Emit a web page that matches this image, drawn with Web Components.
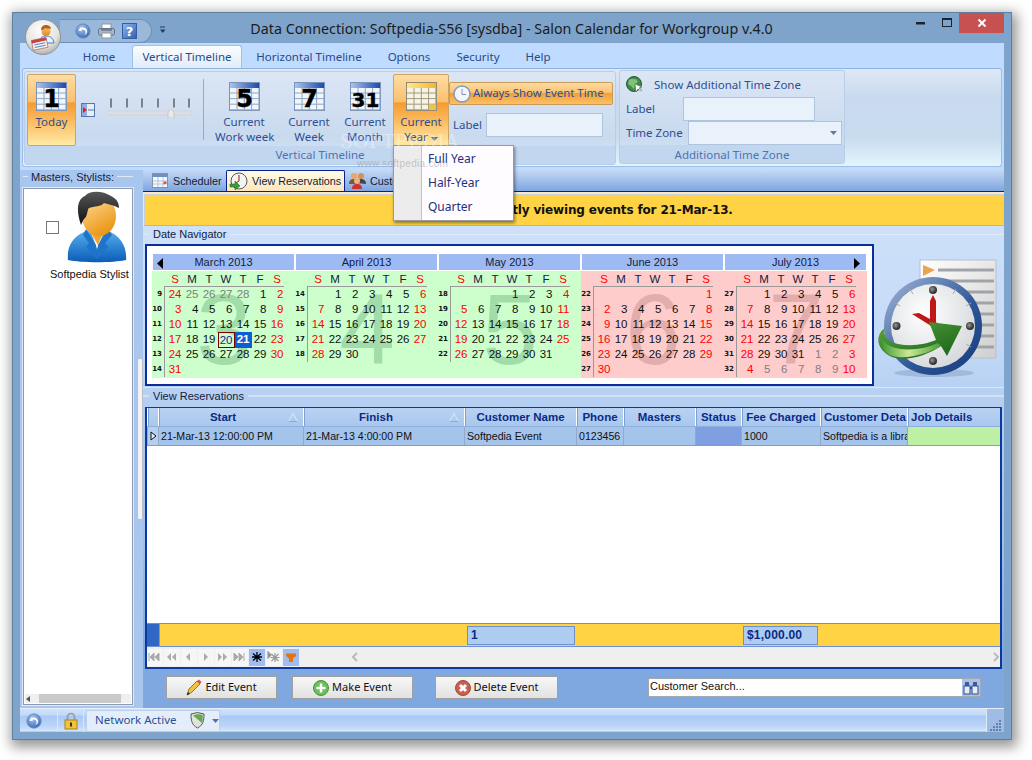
<!DOCTYPE html>
<html><head><meta charset="utf-8"><title>Salon Calendar</title>
<style>
html,body{margin:0;height:100%;background:#fff}
body{padding:12px;box-sizing:border-box;width:1032px;height:760px;overflow:hidden;font-family:"Liberation Sans",sans-serif}
</style></head><body>
<app-window>
  <title-bar></title-bar>
  <ribbon-tabs></ribbon-tabs>
  <ribbon-panel></ribbon-panel>
  <main-area>
    <side-panel slot="side"></side-panel>
    <split-bar slot="split"></split-bar>
    <doc-tabs></doc-tabs>
    <notice-bar>You are currently viewing events for 21-Mar-13.</notice-bar>
    <date-navigator></date-navigator>
    <section-cap>View Reservations</section-cap>
    <res-grid></res-grid>
    <action-row></action-row>
  </main-area>
  <status-bar></status-bar>
  <year-menu></year-menu>
  <soft-mark></soft-mark>
</app-window>
<script>
const UI='"Noto Sans","Open Sans",sans-serif', TH='"Liberation Sans",sans-serif';
function def(name,fn){customElements.define(name,class extends HTMLElement{
  connectedCallback(){if(this.shadowRoot)return;const r=this.attachShadow({mode:'open'});r.innerHTML=typeof fn==='function'?fn(this):fn;}
});}
let gid=0;
function calIcon(d,hot){const id='c'+(++gid);
  const head=hot?['#ffe98a','#f5b52e']:['#a9c4ee','#1c48b0'];
  let lines='';for(let x=8;x<30;x+=7.3)lines+=`<path d="M${x} 6V28" stroke="${hot?'#a09a80':'#90a6c4'}"/>`;
  for(let y=11;y<28;y+=5.6)lines+=`<path d="M1 ${y}H30" stroke="${hot?'#a09a80':'#90a6c4'}"/>`;
  return `<svg width="31" height="29" viewBox="0 0 31 29" style="display:block;overflow:visible"><defs><linearGradient id="${id}"><stop offset="0" stop-color="${head[0]}"/><stop offset="1" stop-color="${head[1]}"/></linearGradient></defs>
  <rect x=".5" y=".5" width="30" height="28" fill="${hot?'#f7f4e4':'#f2f6fb'}" stroke="${hot?'#8f8a70':'#7a93b8'}"/><rect x="1" y="1" width="29" height="5" fill="url(#${id})"/>${lines}
  ${hot?'<rect x="23" y="22.5" width="7" height="5.5" fill="#f5c23c"/>':''}
  ${d?`<text x="15.5" y="25" text-anchor="middle" font-family="DejaVu Sans" font-weight="700" font-size="${d.length>1?20:24}" fill="#000" stroke="#000" stroke-width=".4">${d}</text>`:''}</svg>`;}
const backIcon=(s=18)=>`<svg width="${s}" height="${s}" viewBox="0 0 18 18" style="display:block"><defs><radialGradient id="bk" cx=".4" cy=".3" r=".8"><stop offset="0" stop-color="#a9c8f0"/><stop offset="1" stop-color="#2f62b0"/></radialGradient></defs><circle cx="9" cy="9" r="8" fill="url(#bk)" stroke="#5f86bd"/><path d="M6.5 4.5 3.8 8.5l4 .9-.8-1.6c2-.9 4.2-.2 4.8 1.8.4 1.5-.2 2.8-1.6 3.9 2.8-.8 4-3 3.2-5.4-.9-2.6-3.8-3.6-6.6-2.4z" fill="#fff"/></svg>`;

def('app-window',`<style>
:host{display:block;position:relative;box-sizing:border-box;width:1000px;height:728px;background:#7ea4cc;border:1px solid #5f7f9f;box-shadow:2px 4px 12px 3px rgba(0,0,0,.42);padding:0 7px 7px}
.c{display:flex;flex-direction:column;height:100%}
</style><div class="c"><slot></slot></div>`);

def('title-bar',`<style>
:host{display:block;height:30px;flex:none;position:relative;font-family:${UI}}
.row{display:flex;align-items:center;height:30px;margin-left:-7px;margin-right:-7px}
.orb{flex:none;margin:6px 0 0 12px;width:36px;height:36px;position:relative;z-index:3;margin-bottom:-12px}
.pill{flex:none;margin-left:-1px;width:92px;height:24px;box-sizing:border-box;margin-top:5px;border:1px solid #6e8fb3;border-left:0;border-radius:0 12px 12px 0;background:#9ab9da;display:flex;align-items:center;gap:7px;padding-left:15px}
.more{flex:none;margin:5px 0 0 7px;width:8px}
.t{flex:1;text-align:center;font-size:14.300px;color:#1b1b1b;white-space:nowrap;margin-left:-2px;margin-right:50px;padding-top:1px}
.btns{flex:none;display:flex;align-self:flex-start;margin-right:7px}
.b{width:26px;height:20px;display:flex;align-items:center;justify-content:center}
.x{width:45px;height:20px;background:#c75050;display:flex;align-items:center;justify-content:center;margin-left:-1px}
</style><div class="row">
<div class="orb"><svg width="36" height="36" viewBox="0 0 36 36"><defs><radialGradient id="o" cx=".45" cy=".3" r=".8"><stop offset="0" stop-color="#fff"/><stop offset=".6" stop-color="#e6e4e0"/><stop offset="1" stop-color="#9a9a98"/></radialGradient><linearGradient id="sk" x1="0" y1="0" x2="0" y2="1"><stop offset="0" stop-color="#f8c070"/><stop offset="1" stop-color="#e08a20"/></linearGradient></defs>
<circle cx="18" cy="18" r="17.5" fill="url(#o)" stroke="#8f9296"/>
<path d="M14 24c1-6 4-7 7-7s7 1 8 7z" fill="#eef3fb" stroke="#3c7ec8"/><circle cx="21" cy="12.500" r="4.500" fill="url(#sk)"/><path d="M16 11c0-4 3-5 5-5s5 1 5 4c-2-1-4 0-6-1-1 1-2 2-4 2z" fill="#b5601a"/>
<g transform="rotate(-12 14 24)"><rect x="7" y="20" width="15" height="10" fill="#f4f2ee" stroke="#a05050" stroke-width=".6"/><rect x="7" y="20" width="15" height="3" fill="#c94040"/><path d="M9 25h11M9 27.500h11" stroke="#5f86c8"/></g></svg></div>
<div class="pill">${backIcon(16)}
<svg width="17" height="16" viewBox="0 0 17 16"><rect x="4" y="1" width="9" height="6" fill="#fff" stroke="#8c97a5"/><rect x=".5" y="5.500" width="16" height="6.500" rx="1.500" fill="#aab6c6" stroke="#66758a"/><rect x="4" y="10" width="9" height="5" fill="#fff" stroke="#8c97a5"/><path d="M3 7h11" stroke="#40506a"/></svg>
<svg width="15" height="16" viewBox="0 0 15 16" style="overflow:visible"><defs><linearGradient id="hp" x1="0" y1="0" x2="1" y2="1"><stop offset="0" stop-color="#8fb8ee"/><stop offset="1" stop-color="#2c5fb5"/></linearGradient></defs><rect x=".5" y=".5" width="14" height="15" fill="url(#hp)" stroke="#345f9f"/><text x="7.500" y="13" text-anchor="middle" font-family="DejaVu Sans" font-weight="700" font-size="13" fill="#fff">?</text></svg>
</div>
<div class="more"><svg width="8" height="9" viewBox="0 0 8 9" style="display:block"><path d="M1 1h5" stroke="#213a63"/><path d="M1 3.500h5.500L3.700 7z" fill="#213a63"/></svg></div>
<div class="t">Data Connection: Softpedia-S56 [sysdba] - Salon Calendar for Workgroup v.4.0</div>
<div class="btns"><div class="b"><svg width="10" height="3"><rect width="9" height="2.500" fill="#1c2430"/></svg></div>
<div class="b"><svg width="11" height="10"><rect x=".5" y=".5" width="9" height="8" fill="none" stroke="#1c2430"/><rect x="0" y="0" width="10" height="2" fill="#1c2430"/></svg></div>
<div class="x"><svg width="10" height="10"><path d="M1.500 1.500l7 7M8.500 1.500l-7 7" stroke="#fff" stroke-width="2"/></svg></div></div>
</div>`);

def('ribbon-tabs',`<style>
:host{display:block;height:25px;flex:none;background:#bfdbff;font-family:${UI};font-size:11.500px;color:#2a4a86}
.r{display:flex;height:25px;padding-left:46px;box-sizing:border-box}
.t{display:flex;align-items:center;justify-content:center;height:22px;margin-top:3px;padding-bottom:2px;box-sizing:border-box}
.a{background:linear-gradient(#fafdff,#e0ecfa);border:1px solid #9fc1ea;border-bottom:0;border-radius:3px 3px 0 0;box-sizing:border-box;height:23px;margin-top:2px;color:#2a4a86;padding-bottom:1px}
</style><div class="r"><div class="t" style="width:66px">Home</div><div class="t a" style="width:110px">Vertical Timeline</div>
<div class="t" style="width:134px">Horizontal Timeline</div><div class="t" style="width:66px">Options</div><div class="t" style="width:72px">Security</div><div class="t" style="width:48px">Help</div></div>`);

def('big-btn',h=>`<style>
:host{display:block;flex:none;box-sizing:border-box;height:72px;margin-top:2px;font-family:${UI};font-size:11.500px;line-height:15px;color:#2d4f92;text-align:center;border-radius:2px}
:host([hot]){background:linear-gradient(#fddda2 0,#fac06f 38%,#f59c2f 40%,#fbb658 62%,#ffeaa6 100%);border:1px solid #c9a566}
.i{display:flex;justify-content:center;padding-top:7px;height:31px}
:host(:not([hot])) .i{padding-top:8px;height:30px}
.l{margin-top:2px;white-space:nowrap}
:host([hot]) .l{margin-top:1px}
u{text-decoration-thickness:1px}
</style><div class="i"><slot name="icon"></slot>${calIcon(h.getAttribute('d')||'',h.hasAttribute('year'))}</div><div class="l">${h.getAttribute('l1')}<br>${h.getAttribute('l2')||''}</div>`);

def('ribbon-panel',`<style>
:host{display:block;height:102px;flex:none;background:#bfdbff;font-family:${UI};font-size:11.500px;color:#2d4f92;box-sizing:border-box;padding:0 2px 3px}
.p{height:99px;box-sizing:border-box;border:1px solid #9dbfe8;border-top-color:#8fb4e0;border-radius:3px;background:linear-gradient(#dde8f6,#c9daee 30%,#c8dbef 70%,#e3f5fd);display:flex;padding:2px 1px 0;gap:3px}
.g{box-sizing:border-box;height:94px;border:1px solid #b7cde8;border-radius:3px;display:flex;flex-direction:column;background:linear-gradient(#dbe6f5,#c9daef 70%,#d6e6f6)}
.m{flex:1;display:flex;min-height:0;padding-left:2px}
.cap{height:18px;flex:none;background:#c1d7ef;text-align:center;line-height:17px;color:#4f72b0}
.g2 .cap{line-height:19px}
.slider{flex:none;width:123px;height:72px;margin-top:2px;display:flex;align-items:flex-end;padding-bottom:28px;box-sizing:border-box;padding-left:5px}
.sl{margin-left:13px}
.sep{flex:none;width:1px;height:61px;margin:7px 0 0 4px;background:#9fa9b6}
.rc{flex:none;width:166px;display:flex;flex-direction:column;}
.ab{box-sizing:border-box;height:23px;width:164px;margin-top:10px;border:1px solid #c79a55;border-radius:2px;background:linear-gradient(#fddda2,#fbc272 45%,#f59f35 50%,#fcc066);display:flex;align-items:center;gap:2px;padding-left:3px;white-space:nowrap;color:#2d4f92}
.ab span{padding-bottom:2px;font-size:11.400px}
.lr{display:flex;align-items:center;margin-top:8px;padding-left:4px;gap:4px}
.lr span{width:29px;flex:none;padding-bottom:2px}
.in{box-sizing:border-box;height:24px;border:1px solid #aec4df;background:#e9f1fb;flex:none}
.g2 .m{flex-direction:column;padding:0 0 0 6px;position:relative}
.g2r{display:flex;align-items:center;height:24px}
.g2r span{width:57px;flex:none;padding-bottom:2px}
</style><div class="p">
<div class="g" style="width:592px"><div class="m">
<big-btn hot d="1" l1="<u>T</u>oday" style="width:49px"></big-btn>
<div class="slider"><svg width="14" height="14" style="display:block;margin-bottom:1px"><rect x=".5" y=".5" width="13" height="13" fill="#e8eef7" stroke="#5577aa"/><rect x="1" y="1" width="5" height="12" fill="#8fb0e0"/><path d="M2 4l4 3-4 3z" fill="#e02020"/><path d="M7 7h6" stroke="#5577aa"/></svg>
<svg class="sl" width="84" height="20" style="display:block"><g stroke="#222"><path d="M3 .5v9M19 .5v9M34 .5v9M50 .5v9M66 .5v9M81 .5v9" /></g><rect x="0" y="13" width="84" height="4" fill="#dcdfe2" stroke="#cfd3d8"/><path d="M60 14l3-3 3 3v6h-6z" fill="#e9e9e9" stroke="#c8c8c8"/></svg></div>
<div class="sep"></div>
<big-btn d="5" l1="Current" l2="Work week" style="width:58px;margin-left:11px"></big-btn>
<big-btn d="7" l1="Current" l2="Week" style="width:44px;margin-left:14px"></big-btn>
<big-btn d="31" l1="Current" l2="Month" style="width:44px;margin-left:12px"></big-btn>
<big-btn hot year l1="Current" l2="Year <svg width='7' height='4'><path d='M0 0h7L3.500 4z' fill='#4a6a9a'/></svg>" style="width:56px;margin-left:6px"></big-btn>
<div class="rc"><div class="ab"><svg width="18" height="18" viewBox="0 0 18 18"><circle cx="9" cy="9" r="8" fill="#f5f6f8" stroke="#7e9ac4" stroke-width="1.500"/><path d="M9 4v5.500h4" fill="none" stroke="#7e93b5"/></svg><span>Always Show Event Time</span></div>
<div class="lr"><span>Label</span><div class="in" style="width:117px"></div></div></div>
</div><div class="cap">Vertical Timeline</div></div>
<div class="g g2" style="width:226px;margin-top:-1px"><div class="m">
<div class="g2r" style="height:26px"><svg width="17" height="17" viewBox="0 0 17 17" style="flex:none;margin-right:11px"><circle cx="8" cy="8" r="7.500" fill="#3f8a4a" stroke="#225c30"/><path d="M3 4c3-2 5 0 7-1l2 3-3 2-1 5-3-3-3-2z" fill="#7fc27a"/><path d="M9 8l1 8 2-3 3 2 1-1-3-2 3-1z" fill="#fff" stroke="#555" stroke-width=".5"/></svg><span style="width:auto;padding:0">Show Additional Time Zone</span></div>
<div class="g2r"><span>Label</span><div class="in" style="width:132px"></div></div>
<div class="g2r"><span style="width:62px">Time Zone</span><div class="in" style="width:154px;position:relative"><svg width="7" height="4" style="position:absolute;right:4px;top:9px"><path d="M0 0h7L3.500 4z" fill="#5a7aaa"/></svg></div></div>
</div><div class="cap">Additional Time Zone</div></div>
</div>`);

def('main-area',`<style>
:host{display:block;flex:1;min-height:0;background:#a9c6ef}
.w{display:flex;height:100%}
.s{flex:none;display:flex}
.m{flex:1;min-width:0;display:flex;flex-direction:column;background:linear-gradient(#d2e3fb 0,#c6dbf8 30%,#b2cdf1 45%,#9fbeea 70%,#7fa8e0 90%)}
</style><div class="w"><div class="s"><slot name="side"></slot><slot name="split"></slot></div><div class="m"><slot></slot></div></div>`);

def('side-panel',`<style>
:host{display:block;width:116px;height:100%;box-sizing:border-box;font-family:${TH};font-size:11px;color:#14203c;padding:0 3px 3px;background:#a9c6ef;position:relative}
.gb{height:100%;box-sizing:border-box;display:flex;flex-direction:column}
.h{height:18px;flex:none;display:flex;align-items:flex-start;gap:3px;white-space:nowrap;font-size:11px;line-height:14px}
.h i{height:1px;background:#dfe9f7;display:block;margin-top:6px}
.l{flex:1;background:#fff;border:1px solid #8c9bb1;box-shadow:0 0 0 1px #dfe9f7;display:flex;flex-direction:column;min-height:0}
.it{display:flex;height:86px;position:relative;flex:none;flex-direction:column;align-items:center}
.row{display:flex;align-items:flex-start;width:100%}
.cb{width:11px;height:11px;border:1px solid #777;margin:32px 8px 0 22px;background:#fff;flex:none}
.name{white-space:nowrap;font-size:11px;margin-top:5px;color:#111;padding-left:26px;width:100%;box-sizing:border-box}
.sp{flex:1}
.sb{height:9px;flex:none;background:#efefef;display:flex;align-items:center;margin:0 1px 1px}
.sb b{display:block;width:82px;height:9px;background:#c9c9c9;margin-left:8px}
</style><div class="gb"><div class="h"><i style="width:5px"></i><span>Masters, Stylists:</span><i style="flex:1"></i></div>
<div class="l"><div class="it"><div class="row"><div class="cb"></div>
<svg width="60" height="72" viewBox="0 0 60 72" style="flex:none;margin-top:2px"><defs><linearGradient id="sk2" x1=".2" y1="0" x2=".7" y2="1"><stop offset="0" stop-color="#ffd98f"/><stop offset="1" stop-color="#e8920e"/></linearGradient><linearGradient id="su" x1="0" y1="0" x2="0" y2="1"><stop offset="0" stop-color="#58b0f0"/><stop offset="1" stop-color="#0a5cb8"/></linearGradient><linearGradient id="hr" x1="0" y1="0" x2="0" y2="1"><stop offset="0" stop-color="#555"/><stop offset="1" stop-color="#111"/></linearGradient></defs>
<ellipse cx="30" cy="68" rx="30" ry="3" fill="#d0d8e0"/>
<path d="M1 69c-1-12 3-24 21-30l8 12 9-12c16 6 21 18 20 30-14 3-44 3-58 0z" fill="url(#su)"/>
<path d="M22 36l8 22 9-22-9 6z" fill="#f7f7f7"/><path d="M21 37l10 17 7-17-6-5h-6z" fill="#f2a52c"/><path d="M19 38l-3 6 6 8-3 4 11 12-1-14zM41 38l4 6-7 8 3 4-11 12 1-14z" fill="#1f74c8"/>
<ellipse cx="32" cy="25" rx="17" ry="20" fill="url(#sk2)"/>
<path d="M14 34C9 20 10 8 18 5c5-6 18-5 26 0 6 3 8 7 8 12-6-3-12-4-15-5-3 4-10 3-15 5-2 1-1 8-5 11-1 1-2 4-3 6z" fill="url(#hr)"/></svg></div>
<div class="name">Softpedia Stylist</div></div><div class="sp"></div>
<div class="sb"><svg width="6" height="8"><path d="M5 1 1 4l4 3z" fill="#555"/></svg><b></b></div></div></div>`);

def('split-bar',`<style>
:host{display:block;width:7px;height:100%;background:#a9c6ef;position:relative}
.t{height:162px;margin-top:188px;background:#f3f3f3;border:1px solid #b9c0ca;border-radius:2px;box-sizing:border-box;margin-left:1px;width:6px}
</style><div class="t"></div>`);

def('doc-tabs',()=>`<style>
:host{display:block;height:22px;flex:none;background:linear-gradient(#c4d9f5,#7fa6e0);border-bottom:1px solid #0a1f8f;box-sizing:border-box;font-family:${TH};font-size:10.800px;color:#111a33}
.r{display:flex;height:21px;padding-left:1px}
.t{display:flex;align-items:center;gap:4px;white-space:nowrap;height:21px;box-sizing:border-box;padding-left:8px}
.a{background:linear-gradient(#fffbe8,#fde6bc);border:1px solid #0a1f8f;border-bottom:0;margin-left:1px;padding-left:2px;border-radius:2px 2px 0 0}
</style><div class="r"><div class="t" style="width:81px;gap:5px"><svg width="16" height="15"><rect x=".5" y=".5" width="15" height="14" fill="#f6f8fb" stroke="#8193ae"/><rect x="1" y="1" width="14" height="3" fill="#6f8fc0"/><path d="M6 4v10M11 4v10M1 8h14M1 11h14" stroke="#b6c4d8"/><rect x="11.500" y="8.500" width="3" height="2.500" fill="#e8504a"/></svg><span>Scheduler</span></div>
<div class="t a" style="width:119px"><svg width="19" height="19" viewBox="0 0 19 19" style="flex:none"><circle cx="10" cy="9" r="8" fill="#f5f5f0" stroke="#556"/><path d="M10 3v6l-3 2" stroke="#a01818" fill="none"/><path d="M1 12h5v-3l5 5-5 4v-3H1z" fill="#3c9c3c" stroke="#1f6f1f" stroke-width=".6"/></svg><span>View Reservations</span></div>
<div class="t" style="width:90px;padding-left:4px"><svg width="17" height="17" viewBox="0 0 17 17"><circle cx="5" cy="4" r="3" fill="#e8a566"/><path d="M0 12c0-4 2-5 5-5s5 1 5 5z" fill="#7a5a3a"/><circle cx="12" cy="4" r="3" fill="#d89050"/><path d="M8 11c0-3 2-4 4-4s5 1 5 5z" fill="#444"/><circle cx="8" cy="9" r="3" fill="#f0b080"/><path d="M3 17c0-4 2-5 5-5s5 1 5 5z" fill="#cc3333"/></svg><span>Customers</span></div></div>`);

def('notice-bar',`<style>
:host{display:block;flex:none;height:34px;box-sizing:border-box;padding-top:2px;background:#fde9c8}
.b{height:32px;background:#ffd343;border:1px solid #c7cfda;border-bottom-color:#aeb6c2;box-sizing:border-box;margin-left:1px;display:flex;align-items:center;justify-content:center;font:700 12px "DejaVu Sans",sans-serif;letter-spacing:-.15px;color:#111;white-space:nowrap;}
</style><div class="b"><slot></slot></div>`);

const MONTHS=[['March 2013',3,[9,10,11,12,13,14],[[24,1],[25,1],[26,1],[27,1],[28,1]],31,'g',6,[]],
['April 2013',4,[14,15,16,17,18],[[0]],30,'g',5,[]],
['May 2013',5,[18,19,20,21,22],[[0],[0],[0]],31,'g',5,[]],
['June 2013',6,[22,23,24,25,26,27],[[0],[0],[0],[0],[0],[0]],30,'r',6,[]],
['July 2013',7,[27,28,29,30,31,32],[[0]],31,'r',6,[1,2,3,4,5,6,7,8,9,10]]];
def('cal-month',h=>{const m=MONTHS[+h.getAttribute('i')];const[title,num,wk,pre,len,col,rows,nxt]=m;
 let cells=pre.map(p=>p[0]?[p[0],'o']:[0,'']);for(let d=1;d<=len;d++)cells.push([d,'']);nxt.forEach(d=>cells.push([d,'o']));
 let html='';
 cells.forEach((c,i)=>{const sun=i%7==0||i%7==6;let k=c[1]=='o'?'o':'';if(sun)k='w';if(num==3&&c[0]==20&&!c[1])k='td';if(num==3&&c[0]==21&&!c[1])k='sel';html+=`<div class="d ${k}">${c[0]||''}</div>`;});
 const wkh=wk.map(w=>`<div class="wk">${w}</div>`).join('');
 return `<style>
 :host{display:block;width:143px;flex:none;font-family:${TH};font-size:11.500px;color:#111;position:relative}
 .h{height:16px;margin:0 1px 1px;background:#9dbbf2;text-align:center;line-height:16px;color:#14203c;font-size:11px;}
 .b{height:107px;background:${col=='g'?'#ccffcc':'#ffcccc'};position:relative}
 .big{position:absolute;left:42px;top:16px;font:400 100px/84px "Liberation Sans",sans-serif;color:${col=='g'?'rgba(30,110,60,.24)':'rgba(110,50,50,.2)'};width:60px;text-align:center}
 .names{display:grid;grid-template-columns:repeat(7,17px);margin-left:14.500px;height:14px;line-height:15px;text-align:center;position:relative;color:#14203c;padding-top:1px}
 .names .w{color:#f00}
 .line{height:0;border-top:1px solid #999;margin-left:12px;width:120px;position:relative}
 .body{display:flex;position:relative}
 .wks{width:12px;flex:none;border-right:1px solid #999;box-sizing:content-box;margin-right:1.500px;height:${rows*15}px}
 .wk{height:15px;font:700 7px/15px "DejaVu Sans",sans-serif;text-align:right;padding-right:2px;color:#111}
 .g{display:grid;grid-template-columns:repeat(7,17px);grid-auto-rows:15px;align-content:start}
 .d{text-align:right;padding-right:2px;line-height:15px;box-sizing:border-box;height:15px}
 .o{color:#808080}.w{color:#f00}
 .sel{background:#0a5fd6;color:#fff;font-weight:700;height:16px;margin-top:-.5px}
 .td{outline:1px solid #7a0000;outline-offset:-1px;color:#1a1a9a;height:16px;margin-top:-.5px;line-height:16px}
 </style><div class="h">${title}</div><div class="b"><div class="big">${num}</div>
 <div class="names"><div class="w">S</div><div>M</div><div>T</div><div>W</div><div>T</div><div>F</div><div class="w">S</div></div><div class="line"></div>
 <div class="body"><div class="wks">${wkh}</div><div class="g">${html}</div></div></div>`;});

def('date-navigator',`<style>
:host{display:block;flex:none;height:162px;box-sizing:border-box;font-family:${TH};font-size:11px;color:#14203c;border-bottom:1px solid #dce8f8;position:relative}
.cap{display:flex;align-items:flex-start;height:17px;box-sizing:border-box;gap:4px;line-height:14px;padding-top:1px}
.cap i{height:1px;background:#dfe9f7;display:block;margin-top:7px}
.row{display:flex;margin-left:2px;margin-top:0}
.box{flex:none;width:729px;height:142px;box-sizing:border-box;border:2px solid #0a2f9a;background:#fff;padding:8px 5px 0;display:flex;position:relative;margin-top:1px}
.nav{position:absolute;top:12px}
.ic{flex:none;margin:15px 0 0 2px}
</style><div class="cap"><i style="width:6px"></i><span>Date Navigator</span><i style="flex:1"></i></div>
<div class="row"><div class="box"><cal-month i="0"></cal-month><cal-month i="1"></cal-month><cal-month i="2"></cal-month><cal-month i="3"></cal-month><cal-month i="4"></cal-month>
<svg class="nav" style="left:10px" width="7" height="11"><path d="M6 0v11L0 5.500z" fill="#000"/></svg><svg class="nav" style="left:707px" width="7" height="11"><path d="M0 0v11l6-5.500z" fill="#000"/></svg></div>
<svg class="ic" width="122" height="122" viewBox="0 0 122 122"><defs>
<linearGradient id="sh" x1="0" y1="0" x2="1" y2="1"><stop offset="0" stop-color="#fff"/><stop offset="1" stop-color="#cfcfcf"/></linearGradient>
<linearGradient id="rim" x1="0" y1="0" x2="1" y2="1"><stop offset="0" stop-color="#a4b8d8"/><stop offset=".6" stop-color="#2c5596"/><stop offset="1" stop-color="#153a7a"/></linearGradient>
<radialGradient id="face" cx=".4" cy=".35" r=".8"><stop offset="0" stop-color="#fff"/><stop offset="1" stop-color="#cfd2d6"/></radialGradient>
<linearGradient id="ar" x1="0" y1="0" x2="1" y2="1"><stop offset="0" stop-color="#5fa63e"/><stop offset="1" stop-color="#145f18"/></linearGradient>
<linearGradient id="ar2" x1="0" y1="0" x2="1" y2="0"><stop offset="0" stop-color="#3f9a35"/><stop offset=".45" stop-color="#cbe795"/><stop offset="1" stop-color="#4a9c3a"/></linearGradient>
<radialGradient id="bolt" cx=".4" cy=".4"><stop offset="0" stop-color="#999"/><stop offset="1" stop-color="#333"/></radialGradient></defs>
<ellipse cx="58" cy="115" rx="40" ry="4" fill="#8fa8c8" opacity=".6"/>
<rect x="44" y="2" width="76" height="98" fill="url(#sh)" stroke="#b8c0cc"/>
<path d="M47 7l12 5-12 6z" fill="#eda24c"/>
<g stroke="#a0a4a8" stroke-width="3"><path d="M62 12h56M62 23h56M62 34h56M62 45h56M62 56h56M62 67h56M62 78h56M62 89h56"/></g>
<circle cx="57" cy="68" r="49" fill="url(#rim)"/><circle cx="57" cy="68" r="42" fill="url(#face)"/>
<g stroke="#aaa"><path d="M80 31l-3 5M95 45l-5 3M34 31l3 5M19 45l5 3M95 89l-5-3"/></g>
<circle cx="57" cy="32" r="4" fill="url(#bolt)"/><circle cx="20.500" cy="68" r="4" fill="url(#bolt)"/><circle cx="94" cy="68" r="4" fill="url(#bolt)"/><circle cx="57" cy="103" r="4" fill="url(#bolt)"/>
<path d="M54 68V43l3-6 3 6v25z" fill="#c01818"/><path d="M60 71 36 56l7-1 20 11z" fill="#c01818"/>
<path d="M9 70C6 78 12 84 22 86 36 89 50 86 60 82L53 64l33 4-15 30-6-10C50 98 30 104 16 99 6 95 0 85 3 78c1-4 3-6 6-8z" fill="url(#ar)"/>
<path d="M6 80c4 12 32 16 56 5l3 3C48 98 24 102 14 97 8 94 5 88 6 80z" fill="url(#ar2)"/>
</svg></div>`);

def('section-cap',`<style>
:host{display:block;flex:none;height:19px;box-sizing:border-box;font-family:${TH};font-size:11px;color:#14203c}
.cap{display:flex;align-items:flex-start;gap:4px;line-height:14px;padding-top:1px}
i{height:2px;background:#d4e0f2;display:block;margin-top:6px}
</style><div class="cap"><i style="width:6px"></i><span><slot></slot></span><i style="flex:1"></i></div>`);

const COLS='11px 145px 161px 112px 47px 72px 46px 79px 87px 93px';
def('res-grid',()=>{
 const hd=[['',''],['Start',1],['Finish',1],['Customer Name'],['Phone'],['Masters'],['Status'],['Fee Charged'],['Customer Deta'],['Job Details']];
 const tri=`<svg class="tri" width="10" height="9"><path d="M5 .5 9.500 8.500H.5z" fill="none" stroke="#dfe8f6"/><path d="M.5 8.500h9" stroke="#8fa8d0"/></svg>`;
 const pg=[[`<path d="M1 2v8M6 2 2 6l4 4zM11 2 7 6l4 4z" fill="#aaa" stroke="#aaa"/>`],[`<path d="M6 2 2 6l4 4zM11 2 7 6l4 4z" fill="#aaa"/>`],[`<path d="M8 2 4 6l4 4z" fill="#aaa"/>`],[`<path d="M5 2l4 4-4 4z" fill="#aaa"/>`],[`<path d="M2 2l4 4-4 4zM7 2l4 4-4 4z" fill="#aaa"/>`],[`<path d="M1 2l4 4-4 4zM6 2l4 4-4 4zM11 2v8" fill="#aaa" stroke="#aaa"/>`],
 [`<path d="M7 1v10M2 6h10M3 2.500l8 7M11 2.500l-8 7" stroke="#000" stroke-width="1.300"/>`,'on'],[`<path d="M1 1v6l3-3zM8 2v9M3.500 6.500h9M4.500 3l7 7M11.500 3l-7 7" fill="#888" stroke="#999" stroke-width="1.200"/>`],[`<path d="M2 2.500h10v2.500L9 7.500V11H5V7.500L2 5z" fill="#e8720c"/>`,'on']];
 return `<style>
 :host{display:block;flex:none;height:262px;margin:0 2px 0;font-family:${TH};font-size:10.600px;color:#111;box-sizing:border-box;border:2px solid #0a3aa0;border-bottom-width:2px;border-top-width:1px;background:#fff;display:flex;flex-direction:column}
 .hr,.rw{display:grid;grid-template-columns:${COLS};flex:none}
 .hr{height:19px;background:linear-gradient(#b9d2f2,#a9c7ee);border-bottom:1px solid #8fb0dc;box-sizing:border-box}
 .hc{font:700 11.500px/18px "Liberation Sans",sans-serif;color:#0a2a86;text-align:center;position:relative;border-left:1px solid #fff;box-shadow:inset 1px 0 0 #7fa0d0;white-space:nowrap;overflow:hidden;box-sizing:border-box}
 .hc.s{padding-right:16px}
 .l{text-align:left;padding-left:3px}
 .tri{position:absolute;right:5px;top:5px}
 .rw{height:19px;background:#a5c4eb;border-bottom:1px solid #9a9a9a;box-sizing:border-box}
 .rc{line-height:18px;border-left:1px solid #95a9c6;padding-left:2px;white-space:nowrap;overflow:hidden;box-sizing:border-box}
 .sp{flex:1}
 .ft{height:24px;flex:none;display:flex;border-top:1px solid #6c8fd8;border-bottom:1px solid #6c8fd8;box-sizing:border-box;background:#ffd343;position:relative}
 .ft .bl{width:12px;background:#2f68c4;border-right:1px solid #7a9ad8}
 .sum{position:absolute;top:2px;height:19px;box-sizing:border-box;background:#aecbf0;border:1px solid #6e90c8;font:700 12px/17px "Liberation Sans",sans-serif;color:#0a2a86;padding-left:3px;letter-spacing:.2px}
 .nv{height:20px;flex:none;background:#efefef;display:flex;align-items:center;gap:1px}
 .pb{width:16px;height:17px;background:#f6f6f6;display:flex;align-items:center;justify-content:center}
 .pb.on{background:#9fbdf0}
 .nv svg{display:block}
 .rest{flex:1;display:flex;justify-content:space-between;padding:0 1px 0 52px}
 </style><div class="hr">${hd.map((c,i)=>`<div class="hc${i==8||i==9?' l':''}${c[1]?' s':''}">${c[0]}${c[1]?tri:''}</div>`).join('')}</div>
 <div class="rw"><div class="rc" style="background:#b6cff0;padding:0;display:flex;align-items:center;justify-content:center"><svg width="7" height="10"><path d="M1 1l5 4-5 4z" fill="#dfe9f7" stroke="#111"/></svg></div>
 <div class="rc">21-Mar-13 12:00:00 PM</div><div class="rc">21-Mar-13 4:00:00 PM</div><div class="rc">Softpedia Event</div><div class="rc">0123456</div><div class="rc"></div><div class="rc" style="background:#7f9fe0"></div><div class="rc">1000</div><div class="rc">Softpedia is a libra</div><div class="rc" style="background:#bdf0a4"></div></div>
 <div class="sp"></div>
 <div class="ft"><div class="bl"></div><div class="sum" style="left:320px;width:108px">1</div><div class="sum" style="left:596px;width:75px">$1,000.00</div></div>
 <div class="nv">${pg.map(p=>`<div class="pb ${p[1]||''}"><svg width="14" height="12" viewBox="0 0 14 12">${p[0]}</svg></div>`).join('')}<div class="rest"><svg width="6" height="10"><path d="M5 1 1 5l4 4" fill="none" stroke="#bbb" stroke-width="2"/></svg><svg width="6" height="10"><path d="M1 1l4 4-4 4" fill="none" stroke="#bbb" stroke-width="2"/></svg></div></div>`;});

def('x-btn',h=>`<style>
:host{display:flex;flex:none;box-sizing:border-box;height:23px;align-items:center;justify-content:center;gap:3px;background:linear-gradient(#f7f7f7,#e2e2e2);border:1px solid #a0a0a0;font-family:${UI};font-size:11px;color:#111;white-space:nowrap}
svg{display:block}
span{padding-bottom:2px}
</style><slot name="i"></slot>${h.getAttribute('ic')=='edit'?`<svg width="16" height="17" viewBox="0 0 16 17"><path d="M1 16l2-6 8-8 3 3-8 8z" fill="#f5c23c" stroke="#7a5a10" stroke-width=".8"/><path d="M11 2l2-1.500 2.500 2.500-1.500 2z" fill="#d9534f"/><path d="M1 16l1-3 2 2z" fill="#222"/></svg>`:h.getAttribute('ic')=='make'?`<svg width="16" height="16" viewBox="0 0 16 16"><circle cx="8" cy="8" r="7.500" fill="#6cbf5a" stroke="#4a8f3e"/><path d="M8 3.500v9M3.500 8h9" stroke="#fff" stroke-width="2.500"/></svg>`:`<svg width="16" height="16" viewBox="0 0 16 16"><circle cx="8" cy="8" r="7.500" fill="#c8604e" stroke="#a2473a"/><path d="M5 5l6 6M11 5l-6 6" stroke="#fff" stroke-width="3"/></svg>`}<span>${h.getAttribute('t')}</span>`);

def('action-row',`<style>
:host{display:block;flex:1;min-height:0;position:relative;font-family:${TH};font-size:11px}
.r{display:flex;align-items:flex-start;padding:7px 0 0 23px}
.s{flex:none;box-sizing:border-box;width:333px;height:19px;margin:2px 0 0 90px;background:#fff;border:1px solid #a0a8b4;display:flex;align-items:center;padding-left:1px;color:#111;justify-content:space-between}
.s span{padding-bottom:3px}
.bn{width:18px;height:17px;background:#a8c2ea;display:flex;align-items:center;justify-content:center}
</style><div class="r"><x-btn ic="edit" t="Edit Event" style="width:111px"></x-btn><x-btn ic="make" t="Make Event" style="width:121px;margin-left:15px"></x-btn><x-btn ic="del" t="Delete Event" style="width:123px;margin-left:22px"></x-btn>
<div class="s"><span>Customer Search...</span><div class="bn"><svg width="16" height="14" viewBox="0 0 16 14"><rect x="2" y="1" width="4" height="4" fill="#3c5c9c"/><rect x="10" y="1" width="4" height="4" fill="#3c5c9c"/><rect x="1" y="5" width="6" height="8" fill="#e6ecf5" stroke="#2f4c8a"/><rect x="9" y="5" width="6" height="8" fill="#e6ecf5" stroke="#2f4c8a"/><path d="M7 7h2" stroke="#2f4c8a" stroke-width="2"/></svg></div></div></div>`);

def('status-bar',()=>`<style>
:host{display:block;height:24px;flex:none;font-family:${UI};font-size:11.500px;color:#2d4f92;background:linear-gradient(#cfe1fb,#c2d9f9 25%,#a9c9f4 32%,#bcd5f8 75%,#d4e6fd 95%,#9dbce6);border-top:1px solid #e6eef9;box-sizing:border-box}
.r{display:flex;align-items:center;height:23px}
.ico{flex:none;width:38px;display:flex;justify-content:flex-start;border-right:1px solid #d8e6f8;height:23px;align-items:center;box-sizing:border-box;padding-left:6px}
.lk{flex:none;width:26px;display:flex;justify-content:center;border-right:1px solid #d8e6f8;height:23px;align-items:center;box-sizing:border-box}
.na{flex:none;margin-left:2px;width:134px;height:22px;box-sizing:border-box;background:#e4eefb;border:1px solid #b9cfec;display:flex;align-items:center;padding-left:8px;white-space:nowrap}
.na span{padding-bottom:2px}
.sp{flex:1}
.gr{flex:none;width:18px;height:23px;background:#9fbce4;border-left:1px solid #e0ebf9;box-sizing:border-box;display:flex;align-items:flex-end}
</style><div class="r"><div class="ico">${backIcon(16)}</div><div class="lk"><svg width="14" height="18" viewBox="0 0 14 18"><path d="M3.500 8V5a3.500 3.500 0 017 0v3" fill="none" stroke="#9a9a9a" stroke-width="1.700"/><rect x="1" y="8" width="12" height="9" fill="#f2c433" stroke="#a88418"/><rect x="6" y="10.500" width="2" height="4" fill="#333"/></svg></div>
<div class="na"><span>Network Active</span><svg width="15" height="17" viewBox="0 0 15 17" style="margin-left:13px;flex:none"><path d="M1 2l6.500-1.500L14 2c0 7-1 11-6.500 14C2 13 1 9 1 2z" fill="#dfe4da" stroke="#555"/><path d="M3 3.500 12 11c1-2 .5-5 .7-8L7.500 2z" fill="#6aa84f"/></svg><svg width="7" height="4" style="margin-left:7px;flex:none"><path d="M0 0h7L3.500 4z" fill="#4f72b0"/></svg></div>
<div class="sp"></div><div class="gr"><svg width="16" height="14"><g fill="#6480a8"><rect x="12" y="2" width="2" height="2"/><rect x="9" y="5" width="2" height="2"/><rect x="12" y="5" width="2" height="2"/><rect x="6" y="8" width="2" height="2"/><rect x="9" y="8" width="2" height="2"/><rect x="12" y="8" width="2" height="2"/><rect x="3" y="11" width="2" height="2"/><rect x="6" y="11" width="2" height="2"/><rect x="9" y="11" width="2" height="2"/><rect x="12" y="11" width="2" height="2"/></g></svg></div></div>`);

def('year-menu',`<style>
:host{position:absolute;left:380px;top:132px;width:121px;height:76px;box-sizing:border-box;background:#fff;border:1px solid #9a9a9a;box-shadow:1px 2px 3px rgba(0,0,0,.45);font-family:${UI};font-size:12px;color:#22307a;display:flex;z-index:5}
.g{width:27px;flex:none;background:#ececec;border-right:1px solid #c5c5c5}
.l{flex:1;background:#fffcff;display:flex;flex-direction:column;padding:1px 0 0 6px}
.i{height:24px;line-height:24px}
</style><div class="g"></div><div class="l"><div class="i">Full Year</div><div class="i">Half-Year</div><div class="i">Quarter</div></div>`);

def('soft-mark',`<style>
:host{position:absolute;left:327px;top:118px;font:400 18.500px/22px "DejaVu Serif",serif;color:rgba(255,255,255,.34);letter-spacing:.5px;z-index:6;pointer-events:none;white-space:nowrap}
.s{position:absolute;left:17px;top:28px;font:10px/10px "Liberation Sans",sans-serif;color:rgba(150,150,160,.5);letter-spacing:.3px}
</style>SOFTPEDIA<div class="s">www.softpedia.com</div>`);
</script>
</body></html>
